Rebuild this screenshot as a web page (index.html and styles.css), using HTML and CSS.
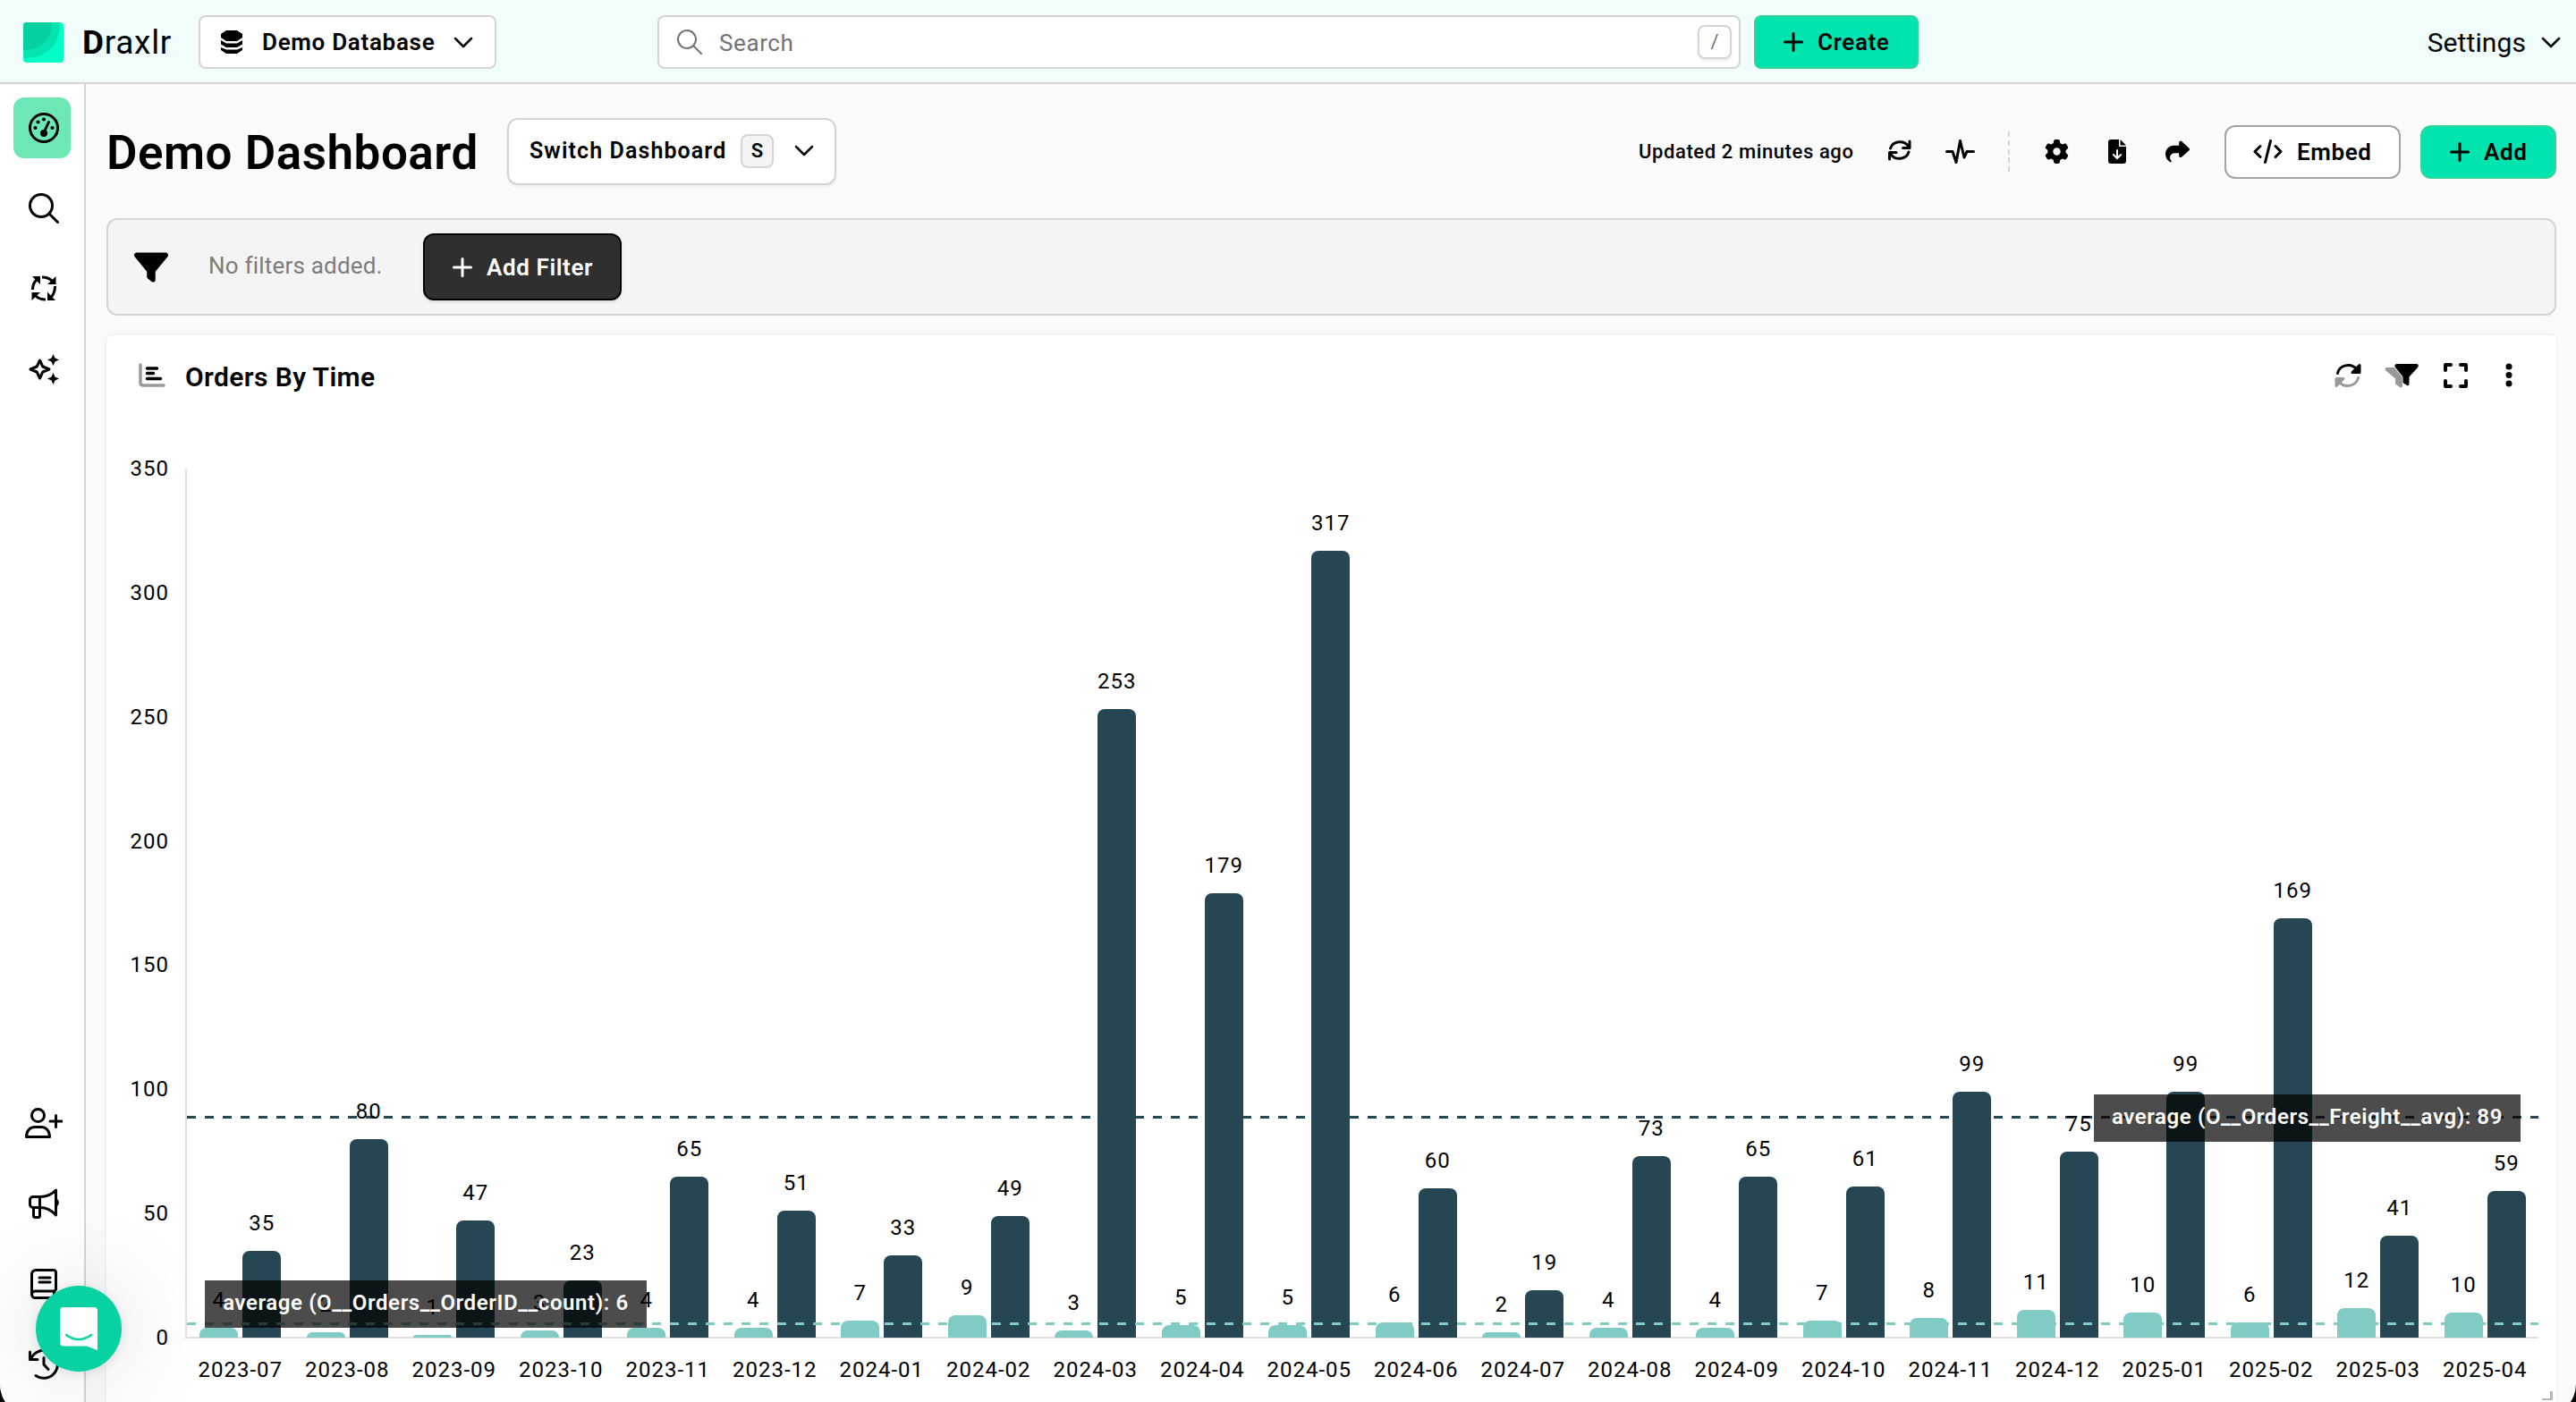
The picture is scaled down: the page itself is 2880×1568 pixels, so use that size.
FILE: index.html
```
<!DOCTYPE html>
<html lang="en">
<head>
  <meta charset="UTF-8">
  <meta name="viewport" content="width=device-width, initial-scale=1.0">
  <title>Demo Dashboard - Draxlr</title>
  <link rel="stylesheet" href="styles.css">
</head>

<body>
  <div class="app">
    <!-- Top bar -->
    <header class="topbar">
      <svg class="logo" viewBox="0 0 45 45">
        <rect width="45" height="45" rx="4" fill="#00ffc4"/>
        <path d="M4 0H41C41 25 27 40 0 40V4A4 4 0 0 1 4 0Z" fill="#04e3b0"/>
        <path d="M4 0H32C32 20 20 31 0 31V4A4 4 0 0 1 4 0Z" fill="#07d0a0"/>
      </svg>
      <span class="brand"><b>D</b>raxlr</span>

      <div class="db-select">
        <svg width="24" height="26" viewBox="0 0 24 26">
          <path d="M6 0H18L24 4V8L18 12H6L0 8V4ZM0 11L6 14.500H18L24 11V15.500L18 19H6L0 15.500ZM0 19L6 21.500H18L24 19V22L18 26H6L0 22Z"/>
        </svg>
        <span class="db-name">Demo Database</span>
        <svg class="line chevron" width="22" height="13" viewBox="0 0 22 13"><path d="M2 2L11 11L20 2"/></svg>
      </div>

      <div class="search">
        <svg class="line thin" width="28" height="28" viewBox="0 0 28 28"><circle cx="11" cy="11" r="10"/><path d="M18.500 18.500L27 27"/></svg>
        <span class="search-text">Search</span>
        <kbd class="slash">/</kbd>
      </div>

      <button class="btn green create">
        <svg class="line" width="22" height="22" viewBox="0 0 22 22"><path d="M11 1.500V20.500M1.500 11H20.500"/></svg>
        <span>Create</span>
      </button>

      <div class="settings">
        <span>Settings</span>
        <svg class="line chevron" width="22" height="13" viewBox="0 0 22 13"><path d="M2 2L11 11L20 2"/></svg>
      </div>
    </header>

    <div class="body">
      <!-- Sidebar -->
      <nav class="sidebar">
        <a class="side-item active">
          <svg class="line" width="34" height="34" viewBox="0 0 34 34">
            <circle cx="17" cy="17" r="15.500"/>
            <path d="M17 22.500L22.500 10.500"/>
            <g fill="#000" stroke="none"><circle cx="17" cy="23" r="4"/><circle cx="7.500" cy="17" r="2.100"/><circle cx="10.500" cy="10.500" r="2.100"/><circle cx="17" cy="7.500" r="2.100"/><circle cx="26.500" cy="17" r="2.100"/></g>
          </svg>
        </a>
        <a class="side-item">
          <svg class="line" width="34" height="34" viewBox="0 0 34 34"><circle cx="14" cy="14" r="12.500"/><path d="M23 23L32.500 32.500"/></svg>
        </a>
        <a class="side-item">
          <svg width="28" height="29" viewBox="0 0 28 29">
            <g fill="none" stroke="#000" stroke-width="3">
              <path d="M1.500 16C1.500 11 3 7.500 6 5"/><path d="M12 2C17 2 20.500 3.500 23 6"/><path d="M26.500 12C26.500 18 25 21 22.500 24"/><path d="M16 27C11 27 8 26 5 23"/>
            </g>
            <path d="M1 1H10V10ZM27.500 1V10H18ZM18 28V18.500L27 28ZM.5 19H10L.5 28Z"/>
          </svg>
        </a>
        <a class="side-item">
          <svg width="34" height="34" viewBox="0 0 34 34">
            <path class="line" d="M12.500 7L15.800 14L23 17L15.800 20L12.500 27L9.200 20L2 17L9.200 14Z"/>
            <path d="M27.500 0L29.500 4.500L34 6.500L29.500 8.500L27.500 13L25.500 8.500L21 6.500L25.500 4.500ZM27.500 21L29.500 25.500L34 27.500L29.500 29.500L27.500 34L25.500 29.500L21 27.500L25.500 25.500Z"/>
          </svg>
        </a>

        <div class="spacer"></div>

        <a class="side-item">
          <svg class="line" width="42" height="34" viewBox="0 0 42 34"><circle cx="14.500" cy="8.500" r="7"/><path d="M1.500 32.500C1.500 25 6 21.500 11 21.500H18C23 21.500 27.500 25 27.500 32.500ZM34.500 8.500V21.500M28 15H41"/></svg>
        </a>
        <a class="side-item">
          <svg class="line" width="34" height="34" viewBox="0 0 34 34"><path d="M30.500 2C25 8 20 9.500 13 9.500H5A3.500 3.500 0 0 0 1.500 13V18A3.500 3.500 0 0 0 5 21.500H13C20 21.500 25 24 30.500 30ZM12.500 9.500V21.500M5.500 22V30.500Q5.500 32.500 7.500 32.500H10.500Q12.500 32.500 12.500 30.500V22"/><path d="M31 13A4 4 0 0 1 31 19Z" fill="#000"/></svg>
        </a>
        <a class="side-item">
          <svg class="line" width="30" height="34" viewBox="0 0 30 34"><path d="M26 25H6A4 4 0 0 0 1.500 29V6A4.500 4.500 0 0 1 6 1.500H26A2.500 2.500 0 0 1 28.500 4V22.500A2.500 2.500 0 0 1 26 25M26.500 25V32.500M28.500 32.500H6A4 4 0 0 1 1.500 28.500M10 10H22M10 15H22"/></svg>
        </a>
        <a class="side-item">
          <svg class="line" width="34" height="34" viewBox="0 0 34 34"><path d="M1.500 3V11.500H10M2.500 11A15.500 15.500 0 1 1 8 29.500M17 9.500V17L22 22.500"/></svg>
        </a>
      </nav>

      <main class="main">
        <!-- Dashboard heading and actions -->
        <div class="title-row">
          <h1>Demo Dashboard</h1>
          <div class="switch">
            <span class="switch-text">Switch Dashboard</span>
            <kbd class="key">S</kbd>
            <svg class="line chevron" width="22" height="13" viewBox="0 0 22 13"><path d="M2 2L11 11L20 2"/></svg>
          </div>

          <div class="actions">
            <span class="updated">Updated 2 minutes ago</span>
            <div class="icons">
              <span class="icon-btn">
                <svg class="line" width="26" height="24" viewBox="0 0 26 24"><path d="M2.500 10A11 10 0 0 1 22.500 7.500M24 2V9.500H16.500M23 14A11 10 0 0 1 3 16.500M1.500 22V14.500H9"/></svg>
              </span>
              <span class="icon-btn">
                <svg class="line" width="33" height="27" viewBox="0 0 33 27"><path d="M1.500 13.500H8L12 25.500L16.500 1.500L21 20L24 13.500H31.500"/></svg>
              </span>
            </div>
            <span class="divider"></span>
            <div class="icons">
              <span class="icon-btn">
                <svg width="27" height="27" viewBox="0 0 512 512"><path d="M495.9 166.6c3.200 8.700 .5 18.400-6.400 24.600l-43.300 39.400c1.100 8.300 1.700 16.800 1.700 25.400s-.6 17.100-1.700 25.400l43.300 39.400c6.900 6.200 9.600 15.900 6.400 24.600c-4.400 11.900-9.700 23.300-15.800 34.300l-4.700 8.100c-6.600 11-14 21.400-22.100 31.200c-5.900 7.200-15.700 9.600-24.500 6.800l-55.700-17.700c-13.400 10.300-28.200 18.900-44 25.400l-12.500 57.100c-2 9.100-9 16.300-18.200 17.800c-13.800 2.300-28 3.500-42.500 3.500s-28.700-1.200-42.500-3.500c-9.200-1.500-16.200-8.700-18.200-17.800l-12.500-57.100c-15.800-6.500-30.600-15.100-44-25.400L83.100 425.900c-8.800 2.800-18.600 .3-24.500-6.800c-8.100-9.800-15.500-20.200-22.100-31.200l-4.700-8.100c-6.100-11-11.400-22.400-15.800-34.300c-3.200-8.700-.5-18.400 6.400-24.600l43.300-39.400C64.600 273.100 64 264.600 64 256s.6-17.100 1.700-25.400L22.400 191.200c-6.900-6.200-9.600-15.900-6.400-24.600c4.400-11.900 9.700-23.300 15.800-34.300l4.700-8.100c6.600-11 14-21.400 22.100-31.200c5.900-7.200 15.700-9.600 24.500-6.800l55.700 17.700c13.400-10.300 28.200-18.900 44-25.400l12.500-57.100c2-9.100 9-16.300 18.200-17.800C227.300 1.200 241.500 0 256 0s28.700 1.200 42.500 3.500c9.200 1.500 16.200 8.700 18.200 17.800l12.500 57.100c15.800 6.500 30.600 15.100 44 25.400l55.700-17.700c8.800-2.800 18.600-.3 24.500 6.800c8.100 9.800 15.500 20.200 22.100 31.200l4.700 8.100c6.100 11 11.400 22.400 15.800 34.300zM256 336a80 80 0 1 0 0-160 80 80 0 1 0 0 160z"/></svg>
              </span>
              <span class="icon-btn">
                <svg width="20" height="27" viewBox="0 0 20 27"><path d="M3 0H12V8H20V24A3 3 0 0 1 17 27H3A3 3 0 0 1 0 24V3A3 3 0 0 1 3 0ZM13.500 0L20 6.500H13.500Z"/><path d="M10 12V21M5.800 17L10 21L14.200 17" fill="none" stroke="#fff" stroke-width="2" stroke-linecap="round"/></svg>
              </span>
              <span class="icon-btn">
                <svg width="27" height="27" viewBox="0 0 512 512"><path d="M307 34.800c-11.500 5.100-19 16.600-19 29.200v64H176C78.800 128 0 206.800 0 304C0 417.300 81.500 467.900 100.200 478.100c2.500 1.400 5.300 1.900 8.100 1.900c10.900 0 19.700-8.900 19.700-19.700c0-7.500-4.300-14.400-9.800-19.500C108.800 431.900 96 414.400 96 384c0-53 43-96 96-96h96v64c0 12.600 7.400 24.100 19 29.200s25 3 34.400-5.400l160-144c6.700-6.100 10.600-14.700 10.600-23.800s-3.800-17.700-10.600-23.800l-160-144c-9.400-8.500-22.900-10.600-34.400-5.400z"/></svg>
              </span>
            </div>
            <button class="btn embed">
              <svg class="line" width="33" height="27" viewBox="0 0 33 27"><path d="M8 7.500L2 13.500L8 19.500M25 7.500L31 13.500L25 19.500M19.500 1.500L13.500 25.500"/></svg>
              <span>Embed</span>
            </button>
            <button class="btn green add">
              <svg class="line" width="22" height="22" viewBox="0 0 22 22"><path d="M11 1.500V20.500M1.500 11H20.500"/></svg>
              <span>Add</span>
            </button>
          </div>
        </div>

        <!-- Filters -->
        <div class="filter-bar">
          <svg width="38" height="38" viewBox="0 0 512 512"><path d="M3.900 54.900C10.500 40.900 24.500 32 40 32H472c15.500 0 29.500 8.900 36.100 22.900s4.600 30.500-5.200 42.500L320 320.900V448c0 12.100-6.800 23.200-17.700 28.600s-23.800 4.300-33.500-3l-64-48c-8.100-6-12.800-15.500-12.800-25.600V320.900L9 97.300C-.7 85.400-2.800 68.800 3.900 54.900z"/></svg>
          <span class="no-filters">No filters added.</span>
          <button class="btn add-filter">
            <svg class="line" width="22" height="22" viewBox="0 0 22 22"><path d="M11 1.500V20.500M1.500 11H20.500"/></svg>
            <span>Add Filter</span>
          </button>
        </div>

        <!-- Chart card -->
        <section class="card">
          <div class="card-head">
            <svg class="line" width="30" height="27" viewBox="0 0 30 27"><path d="M2 2V22Q2 25 5 25H28" stroke="#999" stroke-width="3.500"/><path d="M9.500 6H20.500M9.500 11.500H16.500M9.500 17.500H24.500" stroke-width="3.500"/></svg>
            <h2>Orders By Time</h2>
            <div class="card-icons">
              <span class="card-icon">
                <svg class="line" width="30" height="28" viewBox="0 0 30 28"><g stroke="#999"><path d="M26.500 16.500A12 11 0 0 1 5.500 21.500"/><path d="M2 25.500V17.500H10Z" fill="#999"/></g><path d="M3.500 11.500A12 11 0 0 1 24.500 6.500"/><path d="M28 2.500V10.500H20Z" fill="#000"/></svg>
              </span>
              <span class="card-icon">
                <svg width="38" height="28" viewBox="0 0 38 28"><path d="M2 5H11L20 15V26Q20 28 17 27L12 23.500V17.500L.8 8Q0 5 2 5Z" fill="#999"/><path d="M14 1H36Q39 2 37 5L27.500 15.500V23Q27.500 26 25 25L20.500 22V15.500L12 5Q10 1 14 1Z" stroke="#fff" stroke-width="1.500" paint-order="stroke"/></svg>
              </span>
              <span class="card-icon">
                <svg class="line" width="27" height="28" viewBox="0 0 27 28"><path d="M2 8V2H8M19 2H25V8M25 20V26H19M8 26H2V20" stroke-width="4"/></svg>
              </span>
              <span class="card-icon">
                <svg width="8" height="27" viewBox="0 0 8 27"><circle cx="4" cy="4" r="3.500"/><circle cx="4" cy="13.500" r="3.500"/><circle cx="4" cy="23" r="3.500"/></svg>
              </span>
            </div>
          </div>

          <div class="chart">
            <div class="y-axis">
              <span>350</span><span>300</span><span>250</span><span>200</span><span>150</span><span>100</span><span>50</span><span>0</span>
            </div>
            <div class="plot">
              <div class="columns" id="columns"></div>
              <div class="avg-line avg-freight"></div>
              <div class="avg-line avg-count"></div>
              <div class="avg-label label-freight">average (O__Orders__Freight__avg): 89</div>
              <div class="avg-label label-count">average (O__Orders__OrderID__count): 6</div>
            </div>
            <div class="x-axis" id="x-axis"></div>
          </div>
          <span class="resize"></span>
        </section>
      </main>
    </div>

    <!-- Chat launcher -->
    <div class="chat">
      <svg width="42" height="49" viewBox="0 0 42 49"><path d="M4 0H38A4 4 0 0 1 42 4V48L30 43.500H4A4 4 0 0 1 0 39.500V4A4 4 0 0 1 4 0Z" fill="#fff"/><path d="M7 31Q21 41 35 31" fill="none" stroke="#08d2a1" stroke-width="2.500" stroke-linecap="round"/></svg>
    </div>
  </div>

  <script>
    // month, order count, average freight
    const data = [
      ["2023-07", 4, 35], ["2023-08", 2, 80], ["2023-09", 1, 47], ["2023-10", 3, 23],
      ["2023-11", 4, 65], ["2023-12", 4, 51], ["2024-01", 7, 33], ["2024-02", 9, 49],
      ["2024-03", 3, 253], ["2024-04", 5, 179], ["2024-05", 5, 317], ["2024-06", 6, 60],
      ["2024-07", 2, 19], ["2024-08", 4, 73], ["2024-09", 4, 65], ["2024-10", 7, 61],
      ["2024-11", 8, 99], ["2024-12", 11, 75], ["2025-01", 10, 99], ["2025-02", 6, 169],
      ["2025-03", 12, 41], ["2025-04", 10, 59]
    ];
    const max = 350;

    function bar(value, type) {
      return `<div class="bar-wrap">
        <span class="bar-label">${value}</span>
        <div class="bar ${type}" style="height: ${value / max * 100}%"></div>
      </div>`;
    }

    document.getElementById("columns").innerHTML = data
      .map(d => `<div class="column">${bar(d[1], "count")}${bar(d[2], "freight")}</div>`)
      .join("");

    document.getElementById("x-axis").innerHTML = data
      .map(d => `<span>${d[0]}</span>`)
      .join("");
  </script>
</body>
</html>
```

FILE: styles.css
```
* {
  box-sizing: border-box;
}

body {
  margin: 0;
  height: 100vh;
  overflow: hidden;
  background: #000;
  color: #000;
  font-family: Roboto, "Noto Sans", sans-serif;
  font-size: 26px;
}

svg {
  display: block;
  flex-shrink: 0;
}

/* Stroke icons */
.line {
  fill: none;
  stroke: currentColor;
  stroke-width: 3;
  stroke-linecap: round;
  stroke-linejoin: round;
}

.thin {
  stroke-width: 2;
}

.chevron {
  stroke-width: 2.5;
}

.app {
  position: relative;
  display: flex;
  flex-direction: column;
  height: 1584px;
  border-radius: 0 0 36px 36px;
  overflow: hidden;
  background: #fafafa;
  white-space: nowrap;
}

/* Top bar */
.topbar {
  display: flex;
  align-items: center;
  height: 94px;
  padding: 2px 17px 0 26px;
  background: #f0fdfa;
  border-bottom: 2px solid #d4d4d4;
}

.logo {
  width: 45px;
  height: 45px;
}

.brand {
  width: 130px;
  margin-left: 21px;
  font-size: 37px;
  letter-spacing: 0.7px;
}

.db-select {
  display: flex;
  align-items: center;
  width: 333px;
  height: 60px;
  padding: 0 24px 0 23px;
  background: #fff;
  border: 2px solid #d4d4d4;
  border-radius: 8px;
}

.db-name {
  flex: 1;
  margin-left: 22px;
  font-weight: 600;
  letter-spacing: 0.7px;
}

.search {
  display: flex;
  align-items: center;
  width: 1211px;
  height: 60px;
  margin-left: 180px;
  padding: 0 8px 0 20px;
  background: #fff;
  border: 2px solid #d4d4d4;
  border-radius: 8px;
  color: #737373;
}

.search-text {
  flex: 1;
  margin-left: 19px;
  padding-top: 1px;
  letter-spacing: 0.6px;
}

.slash {
  width: 38px;
  height: 38px;
  border: 2px solid #d4d4d4;
  border-radius: 8px;
  box-shadow: 0 2px 3px rgba(0, 0, 0, 0.08);
  font: 22px/33px Roboto, sans-serif;
  text-align: center;
}

.btn {
  display: flex;
  align-items: center;
  height: 60px;
  padding: 0 0 0 30px;
  border: 2px solid #a3a3a3;
  border-radius: 12px;
  background: #fff;
  color: #000;
  font: 600 26px Roboto, sans-serif;
  letter-spacing: 0.6px;
}

.btn span {
  margin-left: 16px;
}

.green {
  background: #00e5b0;
  border-color: #34d399;
}

.create {
  width: 184px;
  margin-left: 15px;
  padding-left: 31px;
  border-radius: 8px;
}

.settings {
  display: flex;
  align-items: center;
  gap: 17px;
  margin-left: auto;
  font-size: 30px;
  letter-spacing: 0.1px;
}

/* Sidebar */
.body {
  display: flex;
  flex: 1;
}

.sidebar {
  display: flex;
  flex-direction: column;
  gap: 22px;
  width: 96px;
  padding: 15px 15px 24px;
  background: #fff;
  border-right: 2px solid #d4d4d8;
}

.side-item {
  display: flex;
  align-items: center;
  justify-content: center;
  width: 64px;
  height: 68px;
  padding: 0 0 1px 4px;
  border-radius: 12px;
}

.active {
  background: #6ee7b7;
}

.spacer {
  flex: 1;
}

/* Main area */
.main {
  display: flex;
  flex-direction: column;
  flex: 1;
  padding: 38px 22px 0 23px;
}

.title-row {
  display: flex;
  align-items: center;
  height: 75px;
}

h1 {
  width: 448px;
  margin: 0;
  padding-top: 2px;
  font-size: 53px;
  font-weight: 600;
  letter-spacing: 0.5px;
}

.switch {
  display: flex;
  align-items: center;
  width: 368px;
  height: 75px;
  padding: 0 23px 2px;
  background: #fff;
  border: 2px solid #d4d4d4;
  border-radius: 12px;
  box-shadow: 0 2px 3px rgba(0, 0, 0, 0.06);
}

.switch-text {
  width: 236px;
  font-size: 25px;
  font-weight: 600;
  letter-spacing: 1.1px;
}

.key {
  width: 37px;
  height: 38px;
  margin-right: auto;
  background: #f4f4f5;
  border: 2px solid #d4d4d4;
  border-radius: 8px;
  font: 600 22px/34px Roboto, sans-serif;
  text-align: center;
}

.actions {
  display: flex;
  align-items: center;
  gap: 19px;
  margin-left: auto;
}

.updated {
  margin-right: -1px;
  font-size: 22px;
  font-weight: 500;
  letter-spacing: 0.6px;
}

.icons {
  display: flex;
}

.icon-btn {
  display: flex;
  justify-content: center;
  width: 67.5px;
  padding-bottom: 1px;
}

.divider {
  width: 2px;
  height: 45px;
  background: repeating-linear-gradient(#d4d4d4 0 6px, transparent 6px 9.75px);
}

.embed {
  width: 197px;
}

.add {
  width: 152px;
  margin-left: 3px;
  padding-left: 31px;
}

/* Filter bar */
.filter-bar {
  display: flex;
  align-items: center;
  height: 109px;
  margin-top: 37px;
  padding-left: 29px;
  background: #f4f4f4;
  border: 2px solid #d4d4d8;
  border-radius: 12px;
}

.no-filters {
  width: 240px;
  margin-left: 45px;
  padding-bottom: 3px;
  color: #7c7c7c;
  letter-spacing: 0.2px;
}

.add-filter {
  width: 222px;
  height: 75px;
  padding-left: 31px;
  background: #2f2f2f;
  border-color: #000;
  color: #fff;
  box-shadow: 0 2px 3px rgba(0, 0, 0, 0.1);
}

/* Chart card */
.card {
  position: relative;
  flex: 1;
  margin: 20px -2px 0;
  background: #fff;
  border: 2px solid #f4f4f5;
  border-radius: 8px;
}

.card-head {
  display: flex;
  align-items: center;
  height: 89px;
  padding: 0 23px 0 36px;
}

h2 {
  margin: 0 0 0 22px;
  padding-top: 3px;
  font-size: 30px;
  font-weight: 600;
  letter-spacing: 0.4px;
}

.card-icons {
  display: flex;
  margin-left: auto;
}

.card-icon {
  display: flex;
  align-items: center;
  justify-content: center;
  width: 60px;
}

.chart {
  display: grid;
  grid-template-columns: 88px 2631px;
  margin-top: 60px;
  font-size: 24px;
}

.y-axis {
  display: flex;
  flex-direction: column;
  justify-content: space-between;
  height: 1000px;
  margin: -14px 0;
  padding-right: 18px;
  line-height: 28px;
  letter-spacing: 1px;
  text-align: right;
}

.plot {
  position: relative;
  height: 973px;
  border-left: 2px solid #e0e0e0;
  border-bottom: 2px solid #e0e0e0;
}

.columns {
  display: flex;
  height: 972px;
}

.column {
  display: flex;
  flex: 1;
  justify-content: center;
  gap: 5px;
}

.bar-wrap {
  display: flex;
  flex-direction: column;
  align-items: center;
  justify-content: flex-end;
  width: 43px;
}

.bar {
  width: 100%;
  flex-shrink: 0;
  border-radius: 8px 8px 0 0;
}

.count {
  background: #80cbc4;
}

.freight {
  background: #264653;
}

.bar-label {
  position: relative;
  z-index: 2;
  margin-bottom: 17px;
  line-height: 28px;
  letter-spacing: 1px;
}

.avg-line {
  position: absolute;
  left: 0;
  right: 0;
  z-index: 1;
  height: 3px;
}

.avg-freight {
  bottom: 244px;
  background: repeating-linear-gradient(90deg, #264653 0 10px, transparent 10px 20px);
}

.avg-count {
  bottom: 13px;
  background: repeating-linear-gradient(90deg, #80cbc4 0 10px, transparent 10px 20px);
}

.avg-label {
  position: absolute;
  z-index: 3;
  height: 53px;
  background: rgba(0, 0, 0, 0.7);
  color: #fff;
  font-weight: 600;
  line-height: 50px;
  letter-spacing: 0.6px;
  text-align: center;
}

.label-freight {
  right: 20px;
  bottom: 218px;
  width: 477px;
}

.label-count {
  left: 20px;
  bottom: 10px;
  width: 494px;
}

.x-axis {
  display: flex;
  grid-column: 2;
  padding-left: 2px;
  margin-top: 21px;
}

.x-axis span {
  flex: 1;
  text-align: center;
  letter-spacing: 1px;
}

.resize {
  position: absolute;
  right: 4px;
  bottom: 16px;
  width: 12px;
  height: 10px;
  border-right: 3px solid #b5b5b5;
  border-bottom: 2px solid #b5b5b5;
}

/* Chat launcher */
.chat {
  position: absolute;
  left: 40px;
  top: 1438px;
  z-index: 5;
  display: flex;
  align-items: center;
  justify-content: center;
  width: 96px;
  height: 96px;
  border-radius: 50%;
  background: #08d2a1;
  box-shadow: 0 2px 12px rgba(0, 0, 0, 0.1), 0 4px 110px rgba(0, 0, 0, 0.16);
}
```
